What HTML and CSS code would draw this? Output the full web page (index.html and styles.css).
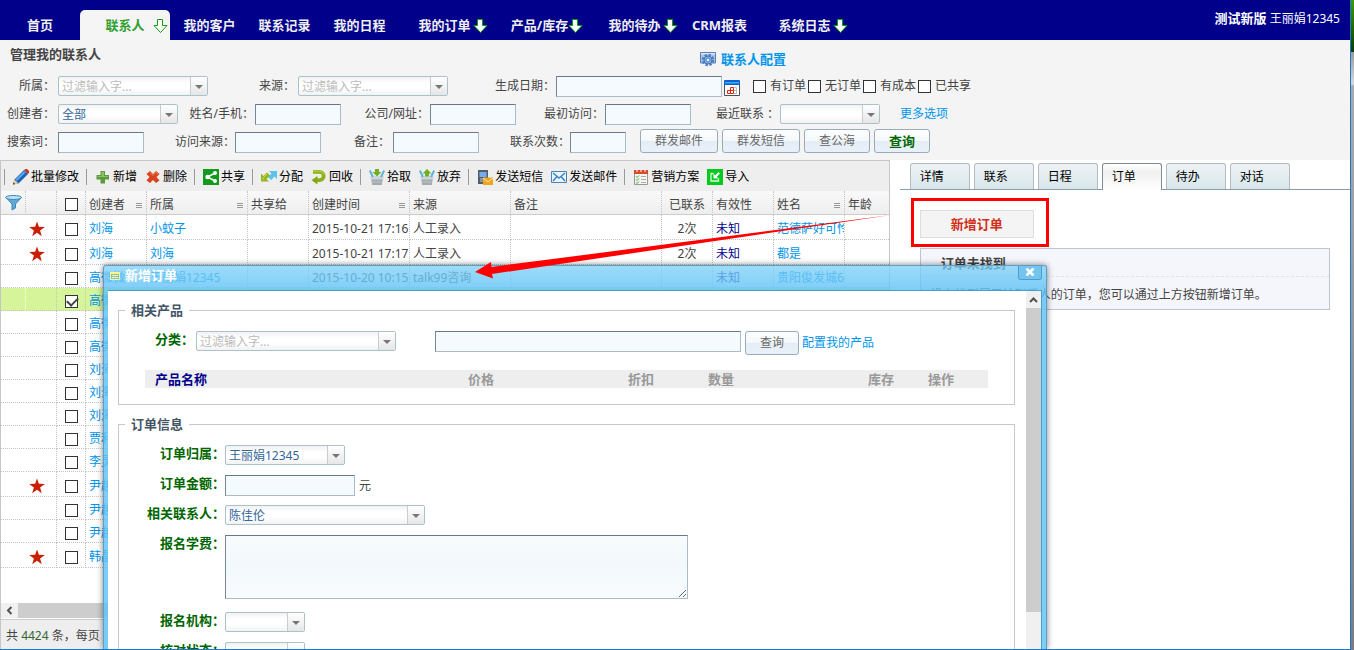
FILE: index.html
```
<!DOCTYPE html>
<html lang="zh-CN">
<head>
<meta charset="utf-8">
<title>管理我的联系人</title>
<link rel="stylesheet" href="styles.css">
</head>
<body>
<svg class="defs" aria-hidden="true">
  <symbol id="down" viewBox="0 0 15 15"><path d="M4.500.5h5v6h4.500L7.500 13.500 1 6.500h3.500z"/></symbol>
  <symbol id="star" viewBox="0 0 16 16"><path fill="#c91f04" d="M8 .5l1.900 5.300 5.900.1-4.700 3.500 1.700 5.800L8 11.800l-4.800 3.400 1.700-5.800L.2 5.900l5.900-.1z"/></symbol>
  <symbol id="basket" viewBox="0 0 16 16"><path fill="#a3abb0" d="M2 8.500h12L12.800 16H3.200z"/><path fill="#ced4d7" d="M1.500 7h13v3.500h-13z"/><path d="M3.500 13h9" stroke="#bfc6ca"/><path d="M.8 1.500L4 8M15.200 1.500L12 8" stroke="#5cb4dc" stroke-width="2" fill="none"/></symbol>
</svg>
<div class="window">
  <header class="topbar">
    <nav class="nav">
      <a href="#" class="nav-item nav-home">首页</a>
      <a href="#" class="nav-item active">联系人<svg class="nav-arrow"><use href="#down"/></svg></a>
      <a href="#" class="nav-item">我的客户</a>
      <a href="#" class="nav-item">联系记录</a>
      <a href="#" class="nav-item">我的日程</a>
      <a href="#" class="nav-item menu">我的订单<svg class="nav-arrow"><use href="#down"/></svg></a>
      <a href="#" class="nav-item menu">产品/库存<svg class="nav-arrow"><use href="#down"/></svg></a>
      <a href="#" class="nav-item menu">我的待办<svg class="nav-arrow"><use href="#down"/></svg></a>
      <a href="#" class="nav-item">CRM报表</a>
      <a href="#" class="nav-item menu">系统日志<svg class="nav-arrow"><use href="#down"/></svg></a>
    </nav>
    <div class="user"><b>测试新版</b> 王丽娟12345</div>
  </header>

  <form class="filters">
    <div class="filter-head">
      <h1>管理我的联系人</h1>
      <a href="#" class="config"><svg width="16" height="16" viewBox="0 0 16 16"><path d="M.5 1.500h15v10.500h-15z" fill="#a5c4e8" stroke="#5f7fb0"/><path d="M1 2h14v1.500H1z" fill="#dbe8f7"/><circle cx="8" cy="9" r="5" fill="none" stroke="#4a82c4" stroke-width="2.500" stroke-dasharray="2.400 1.500"/><circle cx="8" cy="9" r="4" fill="#8fb9e6" stroke="#3d72b5"/><circle cx="8" cy="9" r="2" fill="#eaf3fc" stroke="#3d78bd"/></svg>联系人配置</a>
    </div>
    <div class="row">
      <label class="lb" for="f1">所属：</label><span class="combo w150"><select id="f1" class="hint"><option>过滤输入字...</option></select></span>
      <label class="lb lb-f" for="f2">来源：</label><span class="combo w150"><select id="f2" class="hint"><option>过滤输入字...</option></select></span>
      <label class="lb lb-d" for="f3">生成日期：</label><input id="f3" class="text w166" type="text">
      <svg class="calendar" width="16" height="17" viewBox="0 0 16 17"><path d="M.5 2.500h15v14H.5z" fill="#fff" stroke="#4a5058"/><path d="M0 2q0-1 1-1h14q1 0 1 1v4H0z" fill="#0b62d0"/><path d="M1 3h14v1.500H1z" fill="#35b0f5"/><path d="M3.500 11.500h3v3h-3zM6.500 8.500h3v3h-3zM6.500 11.500h3v3h-3z" fill="#fff" stroke="#e32200"/><path d="M10 8.500h2.500v6H10M10 11.500h2.500" fill="none" stroke="#b5bcc8"/></svg>
      <span class="checks">
        <label><input type="checkbox">有订单</label><label><input type="checkbox">无订单</label><label><input type="checkbox">有成本</label><label><input type="checkbox">已共享</label>
      </span>
    </div>
    <div class="row">
      <label class="lb" for="f4">创建者：</label><span class="combo w120"><select id="f4"><option>全部</option></select></span>
      <label class="lb lb-b" for="f5">姓名/手机：</label><input id="f5" class="text" type="text">
      <label class="lb lb-e" for="f6">公司/网址：</label><input id="f6" class="text" type="text">
      <label class="lb lb-e" for="f7">最初访问：</label><input id="f7" class="text" type="text">
      <label class="lb lb-e" for="f8">最近联系 ：</label><span class="combo w100"><select id="f8"><option></option></select></span>
      <a href="#" class="more">更多选项</a>
    </div>
    <div class="row">
      <label class="lb" for="f9">搜索词：</label><input id="f9" class="text" type="text">
      <label class="lb lb-c" for="f10">访问来源：</label><input id="f10" class="text" type="text">
      <label class="lb lb-a" for="f11">备注：</label><input id="f11" class="text" type="text">
      <label class="lb lb-c" for="f12">联系次数：</label><input id="f12" class="text w56" type="text">
      <span class="buttons">
        <button type="button" class="btn">群发邮件</button><button type="button" class="btn">群发短信</button><button type="button" class="btn">查公海</button><button type="button" class="btn primary">查询</button>
      </span>
    </div>
  </form>

  <main class="main">
    <section class="list">
      <div class="toolbar">
        <i class="sep"></i>
        <button><svg viewBox="0 0 16 16"><path d="M0 15.500l1.500-5L11 1l4 4-9.500 9.500z" fill="#1c63b8"/><path d="M2.500 10.500L11 2l1.500 1.500L4 12z" fill="#5fa8ee"/><path d="M0 15.500l1.500-5 4 4z" fill="#f0c890"/><path d="M0 15.500l.6-2 1.500 1.500z" fill="#333"/><path d="M11 1l1.500-1h1.500l2 2v1.500L15 5z" fill="#c9331a"/></svg>批量修改</button>
        <i class="sep"></i>
        <button><svg viewBox="0 0 16 16"><path d="M5.500 2h4.500v4h4v4.500h-4v4H5.500v-4h-4V6h4z" fill="#5d9a3c"/><path d="M6.500 3H9v4h4v1H2.500V7h4z" fill="#8cc06b"/></svg>新增</button>
        <button><svg viewBox="0 0 16 16"><path d="M5 2l3 3 3-3 3.500 3-3 3 3 3.500L11 14l-3-3-3 3-3.500-2.500 3-3.500-3-3z" fill="#d8441d"/><path d="M5 3.500l3 3 3-3 2 1.500" fill="none" stroke="#f08258"/></svg>删除</button>
        <i class="sep"></i>
        <button><svg viewBox="0 0 16 16"><path d="M0 0h16v16H0z" fill="#129a1c"/><path d="M12 4L4.500 8 12 12" fill="none" stroke="#fff" stroke-width="1.500"/><g fill="#fff"><circle cx="12" cy="4" r="2"/><circle cx="4.500" cy="8" r="2.200"/><circle cx="12" cy="12" r="2"/></g></svg>共享</button>
        <i class="sep"></i>
        <button><svg viewBox="0 0 16 16"><path d="M8 2h8v8l-2.500-2.500L10 11 7 8l3.500-3.500z" fill="#58c4ee"/><path d="M0 4.500L2.500 7 6 3.500l3 3L5.500 10 8 12.500H0z" fill="#93b51e"/><path d="M6 5L2 9v2" fill="none" stroke="#c5da50"/></svg>分配</button>
        <button><svg viewBox="0 0 16 16"><path d="M2 2.800h6.500a4.200 4.200 0 0 1 0 8.400H6" fill="none" stroke="#8cb016" stroke-width="3.800"/><path d="M6.500 7v8.500L.5 11.200z" fill="#83a80f"/><path d="M2 2.200h6.500a5 5 0 0 1 4.500 3.500" fill="none" stroke="#bcd84a"/></svg>回收</button>
        <i class="sep"></i>
        <button><svg viewBox="0 0 16 16"><use href="#basket"/><path d="M6 0h4v3h2.500L8 7.500 3.500 3H6z" fill="#6fb022"/></svg>拾取</button>
        <button><svg viewBox="0 0 16 16"><use href="#basket"/><path d="M8 0l4.500 4.500H10v3H6v-3H3.500z" fill="#6fb022"/></svg>放弃</button>
        <i class="sep"></i>
        <button><svg viewBox="0 0 16 16"><path d="M1 1h10v14H1z" fill="#555d68"/><path d="M2.500 3h7v5h-7z" fill="#71aef0"/><path d="M3 10h6M3 12h6" stroke="#ccc"/><path d="M6 8.500h10V16H6z" fill="#f0a41c"/><path d="M6 9l5 4 5-4" fill="none" stroke="#fff0b8"/></svg>发送短信</button>
        <button><svg viewBox="0 0 16 16"><path d="M.5 2.500h15v11H.5z" fill="#e9f4fc" stroke="#4b83b5"/><path d="M2 4l6 5 6-5M2 12l4-4.500M14 12l-4-4.500" fill="none" stroke="#3a86c4" stroke-width="1.500"/></svg>发送邮件</button>
        <i class="sep"></i>
        <button><svg viewBox="0 0 16 16"><path d="M1.500 2.500h13v13h-13z" fill="#f5f5f0" stroke="#999"/><path d="M1 1h14v4H1z" fill="#d9492b"/><path d="M4 0v3M8 0v3M12 0v3" stroke="#fff"/><path d="M3 7.500l1 1 2-2M3 10.500l1 1 2-2M3 13.500l1 1 2-2" fill="none" stroke="#3d9a38"/><path d="M8 7.500h5M8 10.500h5M8 13.500h5" stroke="#aaa"/></svg>营销方案</button>
        <button><svg viewBox="0 0 16 16"><path d="M0 0h16v16H0z" fill="#05c91f"/><path d="M6.500 4.500H4V12h7.500V9.500" fill="none" stroke="#d8ffd8" stroke-width="1.300"/><path d="M6.500 4.500v5h5L9.800 7.800 13 4.500 11.500 3 8.200 6.200z" fill="#fff"/></svg>导入</button>
      </div>
      <table class="grid">
        <colgroup><col class="c25"><col class="c31"><col class="c29"><col class="c61"><col class="c101"><col class="c61"><col class="c101"><col class="c101"><col class="c151"><col class="c51"><col class="c61"><col class="c71"><col></colgroup>
        <thead>
          <tr><th class="icon funnel"><svg width="17" height="16" viewBox="0 0 17 16"><path d="M1 2.500L7 9v6l3.500-2V9l6-6.500z" fill="#5fa9d8" stroke="#3d86b8"/><ellipse cx="8.500" cy="2.500" rx="8" ry="2" fill="#bfe2f6" stroke="#3d86b8"/></svg></th><th></th><th class="icon"><input type="checkbox" aria-label="全选"></th><th class="sort">创建者</th><th class="sort">所属</th><th>共享给</th><th class="sort">创建时间</th><th>来源</th><th>备注</th><th class="mid">已联系</th><th>有效性</th><th class="sort">姓名</th><th>年龄</th></tr>
        </thead>
        <tbody>
          <tr class="starred"><td></td><td><svg class="star"><use href="#star"/></svg></td><td class="icon"><input type="checkbox" aria-label="选择"></td><td><a href="#">刘海</a></td><td><a href="#">小蚊子</a></td><td></td><td>2015-10-21 17:16</td><td>人工录入</td><td></td><td class="mid">2次</td><td class="state">未知</td><td><a href="#">范德萨好可怜</a></td><td></td></tr>
          <tr class="starred"><td></td><td><svg class="star"><use href="#star"/></svg></td><td class="icon"><input type="checkbox" aria-label="选择"></td><td><a href="#">刘海</a></td><td><a href="#">刘海</a></td><td></td><td>2015-10-21 17:17</td><td>人工录入</td><td></td><td class="mid">2次</td><td class="state">未知</td><td><a href="#">都是</a></td><td></td></tr>
          <tr><td></td><td></td><td class="icon"><input type="checkbox" aria-label="选择"></td><td><a href="#">高微微</a></td><td><a href="#">王丽娟12345</a></td><td></td><td>2015-10-20 10:15</td><td>talk99咨询</td><td></td><td></td><td class="state">未知</td><td><a href="#">贵阳俊发城6</a></td><td></td></tr>
          <tr class="selected"><td></td><td></td><td class="icon"><input type="checkbox" checked aria-label="选择"></td><td><a href="#">高微微</a></td><td></td><td></td><td></td><td></td><td></td><td></td><td></td><td></td><td></td></tr>
          <tr><td></td><td></td><td class="icon"><input type="checkbox" aria-label="选择"></td><td><a href="#">高微微</a></td><td></td><td></td><td></td><td></td><td></td><td></td><td></td><td></td><td></td></tr>
          <tr><td></td><td></td><td class="icon"><input type="checkbox" aria-label="选择"></td><td><a href="#">高微微</a></td><td></td><td></td><td></td><td></td><td></td><td></td><td></td><td></td><td></td></tr>
          <tr><td></td><td></td><td class="icon"><input type="checkbox" aria-label="选择"></td><td><a href="#">刘海</a></td><td></td><td></td><td></td><td></td><td></td><td></td><td></td><td></td><td></td></tr>
          <tr><td></td><td></td><td class="icon"><input type="checkbox" aria-label="选择"></td><td><a href="#">刘海</a></td><td></td><td></td><td></td><td></td><td></td><td></td><td></td><td></td><td></td></tr>
          <tr><td></td><td></td><td class="icon"><input type="checkbox" aria-label="选择"></td><td><a href="#">刘海</a></td><td></td><td></td><td></td><td></td><td></td><td></td><td></td><td></td><td></td></tr>
          <tr><td></td><td></td><td class="icon"><input type="checkbox" aria-label="选择"></td><td><a href="#">贾利</a></td><td></td><td></td><td></td><td></td><td></td><td></td><td></td><td></td><td></td></tr>
          <tr><td></td><td></td><td class="icon"><input type="checkbox" aria-label="选择"></td><td><a href="#">李灵</a></td><td></td><td></td><td></td><td></td><td></td><td></td><td></td><td></td><td></td></tr>
          <tr class="starred"><td></td><td><svg class="star"><use href="#star"/></svg></td><td class="icon"><input type="checkbox" aria-label="选择"></td><td><a href="#">尹越</a></td><td></td><td></td><td></td><td></td><td></td><td></td><td></td><td></td><td></td></tr>
          <tr><td></td><td></td><td class="icon"><input type="checkbox" aria-label="选择"></td><td><a href="#">尹越</a></td><td></td><td></td><td></td><td></td><td></td><td></td><td></td><td></td><td></td></tr>
          <tr><td></td><td></td><td class="icon"><input type="checkbox" aria-label="选择"></td><td><a href="#">尹越</a></td><td></td><td></td><td></td><td></td><td></td><td></td><td></td><td></td><td></td></tr>
          <tr class="starred"><td></td><td><svg class="star"><use href="#star"/></svg></td><td class="icon"><input type="checkbox" aria-label="选择"></td><td><a href="#">韩晶</a></td><td></td><td></td><td></td><td></td><td></td><td></td><td></td><td></td><td></td></tr>
        </tbody>
      </table>
      <div class="hscroll"><svg width="17" height="15" viewBox="0 0 17 15"><path d="M10.500 4L7 7.500l3.500 3.500" fill="none" stroke="#505050" stroke-width="2"/></svg><i></i></div>
      <footer class="status">共 <span>4424</span> 条，每页</footer>
    </section>

    <section class="detail">
      <div class="tabs">
        <button>详情</button><button>联系</button><button>日程</button><button class="current">订单</button><button>待办</button><button>对话</button>
      </div>
      <div class="mark"><button class="new-order">新增订单</button></div>
      <div class="notice">
        <h2>订单未找到</h2>
        <p>没有找到属于该联系人的订单，您可以通过上方按钮新增订单。</p>
      </div>
    </section>
  </main>

  <div class="dialog" role="dialog" aria-label="新增订单">
    <div class="dialog-title">
      <svg width="10" height="8" viewBox="0 0 10 8"><path d="M.5.5h9v7h-9z" fill="#7fc0dc" stroke="#fdf78c"/><path d="M0 0h10v2H0z" fill="#fdf78c"/><path d="M2 3.500h6M2 5.500h6" stroke="#fdf78c"/></svg>
      <span>新增订单</span>
      <button class="close" aria-label="关闭"><svg width="10" height="8" viewBox="0 0 10 8"><path d="M1.500.5l7 7M8.500.5l-7 7" stroke="#fff" stroke-width="2.600"/></svg></button>
    </div>
    <div class="dialog-body">
      <form class="order">
        <fieldset>
          <legend>相关产品</legend>
          <div class="search">
            <label for="o1">分类：</label><span class="combo w200"><select id="o1" class="hint"><option>过滤输入字...</option></select></span>
            <input class="text grow" type="text" aria-label="产品">
            <button type="button" class="btn">查询</button>
            <a href="#">配置我的产品</a>
          </div>
          <table class="products">
            <thead><tr><th class="name">产品名称</th><th class="p160">价格</th><th class="p80">折扣</th><th class="p160">数量</th><th class="p60">库存</th><th class="p60">操作</th></tr></thead>
          </table>
        </fieldset>
        <fieldset class="info">
          <legend>订单信息</legend>
          <div class="field"><label for="o2">订单归属：</label><span class="combo w120"><select id="o2"><option>王丽娟12345</option></select></span></div>
          <div class="field"><label for="o3">订单金额：</label><input id="o3" class="text w130" type="text"><span class="unit">元</span></div>
          <div class="field"><label for="o4">相关联系人：</label><span class="combo w200"><select id="o4"><option>陈佳伦</option></select></span></div>
          <div class="field tall"><label for="o5">报名学费：</label><textarea id="o5" class="text"></textarea></div>
          <div class="field"><label for="o6">报名机构：</label><span class="combo w80"><select id="o6"><option></option></select></span></div>
          <div class="field"><label for="o7">核对状态：</label><span class="combo w80"><select id="o7"><option></option></select></span></div>
        </fieldset>
      </form>
      <div class="vscroll"><svg width="15" height="17" viewBox="0 0 15 17"><path d="M4 11l3.500-3.500L11 11" fill="none" stroke="#505050" stroke-width="2"/></svg><i></i></div>
    </div>
  </div>
  <svg class="pointer" width="416" height="66" viewBox="0 0 416 66"><path d="M0 57L16 47l.5 5L416 0 17 59l1 4.500z" fill="#f00"/></svg>
</div>
</body>
</html>
```
FILE: styles.css
```
* { box-sizing: border-box; }
body {
  margin: 0;
  background: linear-gradient(#3f9a0c, #0c3c04 52px, #999 52px, #d8d8d8 84px, #aaa 86px, #7d7d7d);
  color: #444;
  font: 12px/16px "Noto Sans", "Noto Sans CJK SC", sans-serif;
}
input, select, textarea, button { font: inherit; color: inherit; margin: 0; border-radius: 0; }
button { background: none; border: 0; padding: 0; white-space: nowrap; }
a { color: #0094ea; text-decoration: none; }
h1, h2, p { margin: 0; }
svg { flex: none; }
.defs { position: absolute; width: 0; height: 0; }
.window {
  position: relative;
  display: flex;
  flex-direction: column;
  height: 100vh;
  margin-right: 3px;
  border-right: 1px solid #1979ca;
  border-bottom: 1px solid #1979ca;
  background: #fff;
  overflow: hidden;
}

/* top navigation */
.topbar { display: flex; justify-content: space-between; height: 40px; flex: none; background: #00008b; color: #fff; }
.nav { display: flex; align-items: flex-end; }
.nav-item {
  position: relative;
  width: 75px;
  height: 30px;
  line-height: 30px;
  text-align: center;
  font-size: 13px;
  font-weight: bold;
  color: #eee;
  white-space: nowrap;
}
.nav-item.nav-home { width: 80px; }
.nav-item.active { width: 90px; margin-right: 2px; background: #f5f5f5; color: #30a030; border-radius: 5px 5px 0 0; }
.nav-item.menu { width: 95px; }
.nav-arrow { position: absolute; right: 4px; top: 9px; width: 15px; height: 15px; fill: #fff; stroke: #0a9b0a; }
.active .nav-arrow { right: 2px; }
.user { padding: 10px 10px 0 0; white-space: nowrap; }
.user b { font-size: 13px; }

/* filter form */
.filters { flex: none; padding-bottom: 4px; background: #f4f4f4; }
.filter-head { display: flex; height: 32px; padding-left: 10px; }
.filter-head h1 { flex: 0 0 690px; padding-top: 6px; font-size: 13px; line-height: 16px; }
.config { display: flex; gap: 5px; padding-top: 11px; font-size: 13px; font-weight: bold; white-space: nowrap; }
.row { display: flex; align-items: center; height: 28px; white-space: nowrap; }
.lb { flex: none; width: 58px; padding-right: 3px; text-align: right; }
.lb-a { width: 72px; }
.lb-b { width: 77px; padding-right: 1px; }
.lb-e { width: 89px; padding-right: 1px; }
.lb-c { width: 91px; padding-right: 0; }
.lb-d { width: 108px; padding-right: 1px; }
.lb-f { width: 90px; }
.text {
  flex: none;
  width: 86px;
  height: 21px;
  padding: 0 3px;
  border: 1px solid #a9bccb;
  border-top-color: #68788a;
  border-left-color: #76879a;
  background: #f5fafe;
}
.combo {
  position: relative;
  flex: none;
  height: 20px;
  border: 1px solid #aac2c9;
  border-radius: 2px;
  background: linear-gradient(#f1f1f1, #fff 6px, #fff 11px, #f2f2f2);
}
.combo::before {
  content: "";
  position: absolute;
  right: 0;
  top: 0;
  width: 16px;
  height: 18px;
  border-left: 1px solid #ccc;
  background: linear-gradient(#fff, #e6e6e6);
  pointer-events: none;
}
.combo::after {
  content: "";
  position: absolute;
  right: 4px;
  top: 8px;
  border: 4px solid transparent;
  border-top-color: #777;
  border-bottom: 0;
  pointer-events: none;
}
.combo select {
  display: block;
  width: 100%;
  height: 18px;
  padding: 2px 18px 0 3px;
  border: 0;
  background: none;
  appearance: none;
  line-height: 16px;
  color: #336699;
}
.combo select.hint { color: #bbb; }
.w56 { width: 56px; }
.w80 { width: 80px; }
.w100 { width: 100px; }
.w120 { width: 120px; }
.w130 { width: 130px; }
.w150 { width: 150px; }
.w166 { width: 166px; }
.w200 { width: 200px; }
.calendar { margin: 2px 13px 0 2px; }
input[type="checkbox"] {
  display: block;
  position: relative;
  flex: none;
  width: 13px;
  height: 13px;
  appearance: none;
  border: 1px solid #333;
  background: #fff;
}
input[type="checkbox"]:checked::after {
  content: "";
  position: absolute;
  left: 1px;
  top: 1px;
  width: 9px;
  height: 5px;
  border: solid #444;
  border-width: 0 0 2px 2px;
  transform: rotate(-45deg);
}
.checks { display: flex; gap: 2px; }
.checks label { display: flex; align-items: center; gap: 4px; }
.more { margin-left: 20px; }
.buttons { display: flex; gap: 4px; margin: 0 0 3px 14px; }
.btn {
  flex: none;
  height: 24px;
  padding: 0 14px;
  border: 1px solid #9bacb8;
  border-radius: 3px;
  background: linear-gradient(#fdfefe, #f4f8fa 11px, #e4edf5 11px, #e9f0f9);
  color: #666;
}
.btn.primary { color: #006600; font-size: 13px; font-weight: bold; }

/* contact list */
.main { display: flex; flex: 1; min-height: 0; }
.list { flex: 0 0 65.9%; display: flex; flex-direction: column; min-width: 0; border: solid #c6c6c6; border-width: 1px 1px 0; }
.toolbar { display: flex; align-items: center; flex: none; height: 30px; padding-top: 2px; background: #eee; color: #000; }
.toolbar .sep { width: 1px; height: 16px; margin: 0 4px 0 3px; background: #999; }
.toolbar button { display: flex; align-items: center; gap: 2px; padding: 0 4px; }
.toolbar svg { width: 16px; height: 16px; }
.grid { width: 100%; table-layout: fixed; border-collapse: separate; border-spacing: 0; }
.c25 { width: 25px; } .c29 { width: 29px; } .c31 { width: 31px; } .c51 { width: 51px; }
.c61 { width: 61px; } .c71 { width: 71px; } .c101 { width: 101px; } .c151 { width: 151px; }
.grid th, .grid td {
  height: 23px;
  padding: 4px 0 0 3px;
  border-right: 1px dotted #c4c4c4;
  border-bottom: 1px dotted #c4c4c4;
  overflow: hidden;
  white-space: nowrap;
  text-align: left;
  font-weight: normal;
  line-height: 16px;
}
.grid th { height: 24px; border-bottom: 1px solid #ccc; background: linear-gradient(#f9f9f9, #eee); }
.grid th:last-child, .grid td:last-child { border-right: 0; }
.grid td:first-child { border-right-color: #fff; }
.grid .starred td { height: 25px; }
.grid .icon { padding: 4px 0 0; }
.grid .funnel { padding: 0; }
.grid .icon > * { display: block; margin: 0 auto; }
.grid .mid { padding: 4px 0 0; text-align: center; }
.grid .state { color: #00008b; }
.grid .selected td { background: #d6f59b; }
.grid .sort::after {
  content: "";
  float: right;
  width: 6px;
  height: 5px;
  margin: 6px 4px 0 0;
  background: repeating-linear-gradient(#999 0 1px, transparent 1px 2px);
}
.star { display: block; width: 16px; height: 16px; }
.hscroll { display: flex; flex: none; height: 15px; margin-top: auto; background: #f0f0f0; }
.hscroll i { flex: 0 0 70%; background: #cdcdcd; }
.status { flex: none; height: 30px; margin-top: 1px; padding: 8px 5px; border-top: 1px solid #ccc; background: #eee; }
.status span { color: #336633; }

/* detail panel */
.detail { flex: 1; min-width: 0; padding: 3px 0 0 10px; }
.tabs {
  display: flex;
  gap: 4px;
  height: 27px;
  padding-left: 10px;
  border-bottom: 1px solid #8a9daa;
}
.tabs button {
  width: 60px;
  height: 26px;
  padding-left: 9px;
  border: solid #b4bcc2;
  border-width: 1px 1px 0;
  border-radius: 3px 3px 0 0;
  background: linear-gradient(#eef3f6, #d8e6ea);
  color: #000;
  text-align: left;
}
.tabs .current { height: 27px; border-color: #7f8c96; background: linear-gradient(#fff, #f0f0f0 8px, #fff); }
.mark { display: flex; width: 138px; margin: 8px 0 0 11px; padding: 9px 12px 6px 6px; border: 3px solid #f00; }
.new-order { flex: 1; height: 28px; border: 1px solid #ddd; background: #f4f4f4; color: #d22d18; font-size: 13px; font-weight: bold; }
.notice { margin: 1px 20px 0; height: 62px; border: 1px solid #bcc5d0; background: #f4f6fb; }
.notice h2 { height: 28px; padding: 6px 20px; border-bottom: 1px dashed #e0e3ea; font-size: 13px; line-height: 16px; }
.notice p { padding: 10px 10px 0; white-space: nowrap; }

/* order dialog */
.dialog {
  position: absolute;
  left: 103px;
  top: 265px;
  bottom: 0;
  width: 944px;
  display: flex;
  flex-direction: column;
  padding: 0 4px;
  border: solid #5b9fc4;
  border-width: 1px 1px 0;
  border-radius: 3px 3px 0 0;
  background: linear-gradient(rgba(125, 207, 248, .75), rgba(95, 194, 246, .82) 25px);
  box-shadow: 0 0 6px rgba(0, 0, 0, .5);
}
.dialog-title { display: flex; gap: 5px; flex: none; height: 24px; padding: 0 0 0 2px; color: #fff; font-size: 13px; font-weight: bold; line-height: 18px; }
.dialog-title > svg { margin-top: 6px; }
.close { display: flex; justify-content: center; width: 24px; height: 14px; margin-left: auto; padding-top: 2px; border: solid #4b9fcd; border-width: 0 1px 1px; border-radius: 0 0 3px 3px; background: #73c4ef; }
.dialog-body { display: flex; flex: 1; min-height: 0; border: solid #46a0cf; border-width: 1px 1px 0 0; background: #fff; overflow: hidden; }
.order { flex: 1; padding: 11px 11px 0 10px; }
.order fieldset { margin: 0 0 11px; padding: 0 0 16px; border: 1px solid #c8c8c8; }
.order legend { margin-left: 6px; padding: 0 6px; color: #445566; font-size: 13px; font-weight: bold; line-height: 16px; }
.order label { color: #006600; font-size: 13px; font-weight: bold; white-space: nowrap; }
.search { display: flex; align-items: flex-start; height: 52px; padding: 13px 0 0 36px; }
.search label { margin-right: 2px; }
.search .grow { width: 306px; margin: 0 4px 0 39px; }
.search a { margin: 4px 0 0 3px; }
.products { width: calc(100% - 52px); margin: 0 26px; table-layout: fixed; border-collapse: collapse; background: #eee; }
.products th { height: 18px; padding: 0; color: #999; font-size: 13px; line-height: 18px; text-align: left; }
.products .name { padding-left: 10px; color: #00008b; }
.p60 { width: 60px; } .p80 { width: 80px; } .p160 { width: 160px; }
.order .info { padding-top: 13px; }
.field { display: flex; height: 30px; }
.field label { width: 106px; text-align: right; }
.field .unit { margin: 3px 0 0 4px; }
.field.tall { height: 77px; }
.field textarea { width: 463px; height: 64px; background: linear-gradient(#f7fbfc, #f2f8fc 50%, #f9fcfd); }
.vscroll { display: flex; flex-direction: column; width: 15px; flex: none; background: #f0f0f0; }
.vscroll i { flex: 0 0 85%; background: #cdcdcd; }

/* callout arrow */
.pointer { position: absolute; left: 475px; top: 215px; }
```
